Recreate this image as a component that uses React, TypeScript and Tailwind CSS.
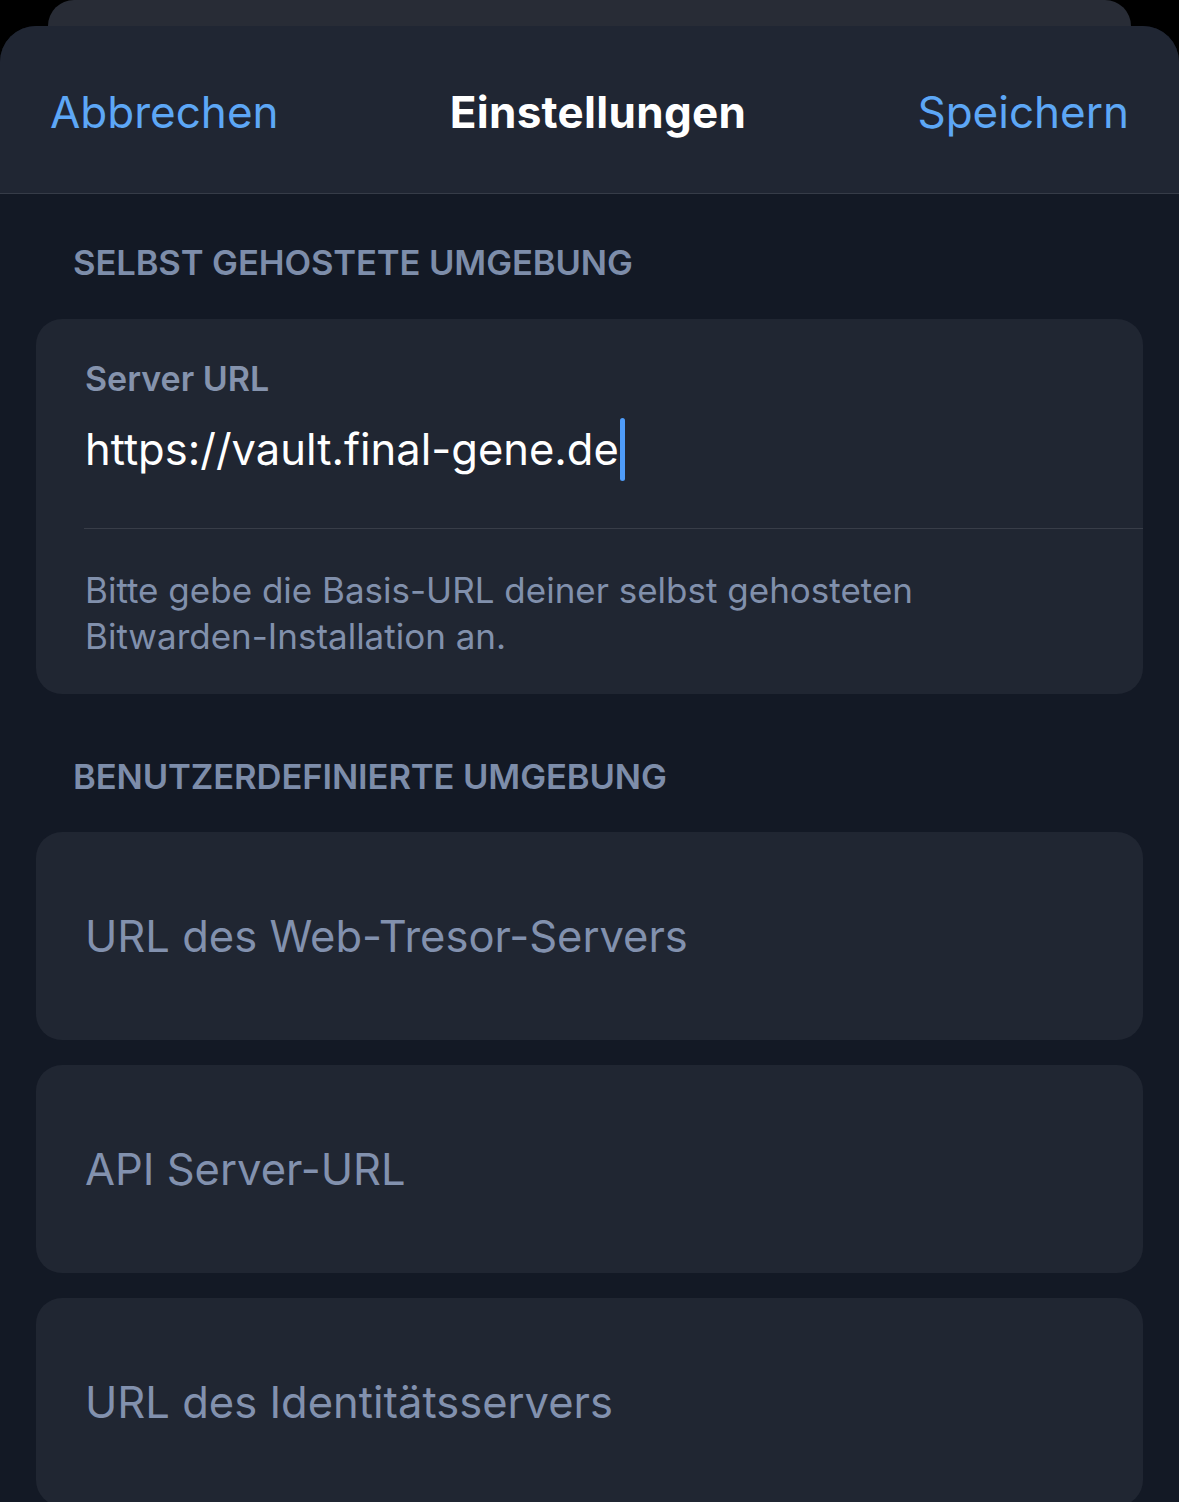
const font = { fontFamily: "Inter, 'Noto Sans', sans-serif" };

function SectionTitle({ children, className }: { children: string; className: string }) {
  return (
    <div className={`px-[73px] text-[34.6px] leading-[40px] font-semibold tracking-[-0.1px] text-[#7d8daa] ${className}`}>
      {children}
    </div>
  );
}

function PlaceholderCard({ label }: { label: string }) {
  return (
    <div className="mx-[36px] flex h-[208px] items-center rounded-[26px] bg-[#202632] px-[49px]">
      <span className="text-[43.5px] leading-[52px] text-[#8291ae]">{label}</span>
    </div>
  );
}

export default function App() {
  return (
    <div className="min-h-screen overflow-hidden bg-black" style={font}>
      <div className="mx-[48px] h-[26px] rounded-t-[30px] bg-[#282c36]" />
      <div className="min-h-[1476px] overflow-hidden rounded-t-[36px] bg-[#131925]">
        <header className="flex h-[168px] items-center justify-between border-b border-[#363c48] bg-[#202633] px-[50px] pt-[4px]">
          <button className="text-[44px] leading-[52px] text-[#5da7f6]">Abbrechen</button>
          <h1 className="text-[44px] leading-[52px] font-bold tracking-[0.3px] text-white">Einstellungen</h1>
          <button className="text-[44px] leading-[52px] text-[#5da7f6]">Speichern</button>
        </header>

        <SectionTitle className="pt-[48px] pb-[37px]">SELBST GEHOSTETE UMGEBUNG</SectionTitle>

        <div className="mx-[36px] rounded-[26px] bg-[#202632] pt-[40px] pb-[35px]">
          <div className="px-[49px] text-[34px] leading-[40px] font-semibold text-[#8593ad]">Server URL</div>
          <div className="mt-[26px] flex h-[48px] items-center px-[49px]">
            <span className="text-[43.5px] leading-[48px] text-white">https://vault.final-gene.de</span>
            <span className="ml-[1px] h-[63px] w-[5px] rounded-full bg-[#4f9cf9]" />
          </div>
          <div className="mt-[55px] ml-[48px] h-px bg-[#383d48]" />
          <p className="mt-[38px] px-[49px] text-[35px] leading-[46px] text-[#8190ac]">
            Bitte gebe die Basis-URL deiner selbst gehosteten
            <br />
            Bitwarden-Installation an.
          </p>
        </div>

        <SectionTitle className="pt-[62px] pb-[36px]">BENUTZERDEFINIERTE UMGEBUNG</SectionTitle>

        <div className="flex flex-col gap-[25px]">
          <PlaceholderCard label="URL des Web-Tresor-Servers" />
          <PlaceholderCard label="API Server-URL" />
          <PlaceholderCard label="URL des Identitätsservers" />
        </div>
      </div>
    </div>
  );
}
